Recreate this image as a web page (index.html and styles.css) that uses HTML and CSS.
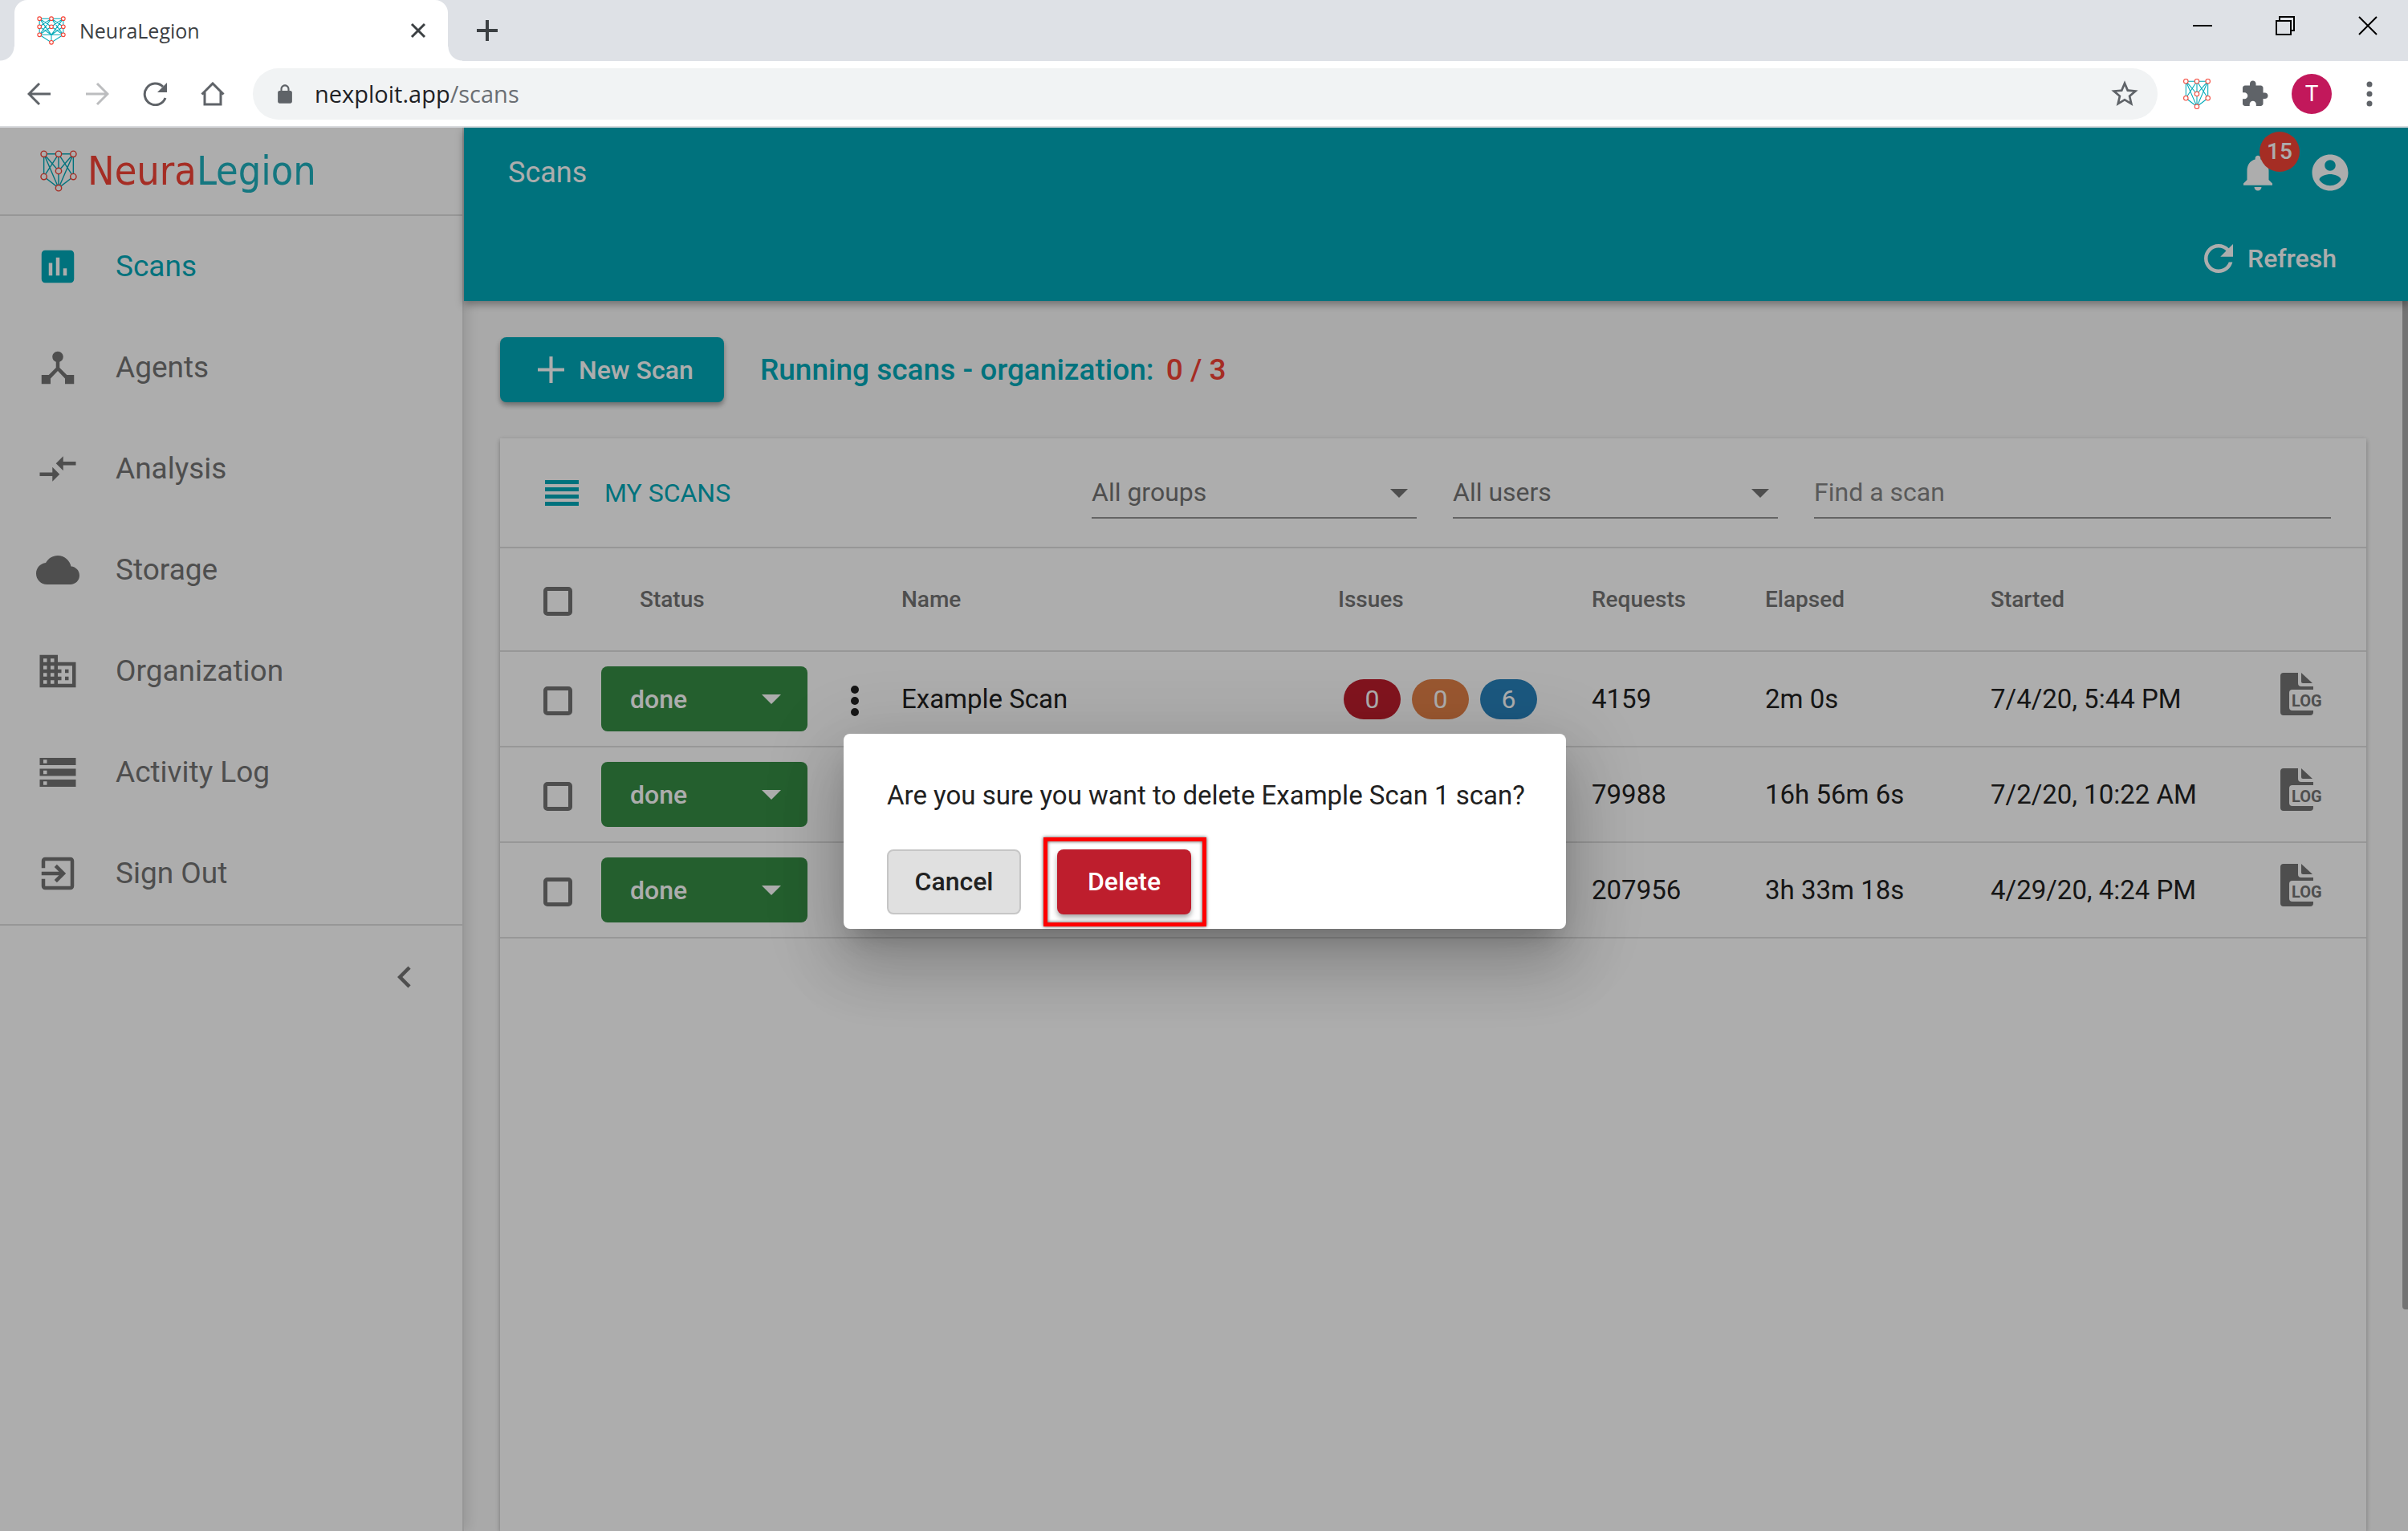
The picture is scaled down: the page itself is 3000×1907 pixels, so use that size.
FILE: index.html
```html
<!DOCTYPE html>
<html lang="en">
<head>
<meta charset="utf-8">
<title>NeuraLegion</title>
<link rel="stylesheet" href="styles.css">
</head>
<body>
<svg class="sprite" aria-hidden="true">
  <symbol id="mark" viewBox="0 0 34 38">
    <path class="mark-line" d="M4 4H30M4 4V24M30 4V24M4 4L17 19L30 4M4 4L17 34L30 4M17 4L4 24M17 4L30 24M17 4V34M4 24L17 34L30 24"/>
    <g class="mark-node"><circle cx="4" cy="4" r="2.6"/><circle cx="17" cy="4" r="2.6"/><circle cx="30" cy="4" r="2.6"/><circle cx="17" cy="19" r="2.6"/><circle cx="4" cy="24" r="2.6"/><circle cx="30" cy="24" r="2.6"/><circle cx="17" cy="34" r="2.6"/></g>
  </symbol>
  <symbol id="favicon" viewBox="0 0 34 34">
    <path class="mark-line" d="M3 3H31M3 3V22M31 3V22M3 22H31M3 3L17 12.500L31 3M3 12.500L17 3L31 12.500M3 12.500L17 22L31 12.500M3 3L17 22L31 3M3 22L17 3L31 22M3 22L17 12.500L31 22M3 22L17 31L31 22M17 22V31"/>
    <g class="mark-node"><circle cx="3" cy="3" r="2.200"/><circle cx="17" cy="3" r="2.200"/><circle cx="31" cy="3" r="2.200"/><circle cx="3" cy="12.500" r="2.200"/><circle cx="17" cy="12.500" r="2.200"/><circle cx="31" cy="12.500" r="2.200"/><circle cx="3" cy="22" r="2.200"/><circle cx="31" cy="22" r="2.200"/><circle cx="17" cy="31" r="2.200"/></g>
  </symbol>
  <symbol id="caret" viewBox="0 0 24 12"><path d="M0 0h24L12 12z"/></symbol>
  <symbol id="dots" viewBox="0 0 12 38"><circle cx="6" cy="5" r="5"/><circle cx="6" cy="19" r="5"/><circle cx="6" cy="33" r="5"/></symbol>
  <symbol id="log" viewBox="0 0 54 56">
    <path d="M5 1H23V14Q23 18 27 18H42V22H16Q12 22 12 26V44Q12 48 16 48H42V50Q42 54 38 54H5Q1 54 1 50V5Q1 1 5 1Z"/>
    <path d="M27 1L41 14H29Q27 14 27 12Z"/>
  </symbol>
</svg>

<header class="browser">
  <div class="tabstrip">
    <div class="tab">
      <svg class="favicon"><use href="#favicon"/></svg>
      <span class="tab-title">NeuraLegion</span>
      <button class="plain" aria-label="Close tab"><svg class="i20" viewBox="0 0 20 20"><path class="s3" d="M2 2L18 18M18 2L2 18"/></svg></button>
    </div>
    <button class="plain new-tab" aria-label="New tab"><svg class="i28" viewBox="0 0 28 28"><path class="s4" d="M14 1V27M1 14H27"/></svg></button>
    <div class="window-controls">
      <button class="plain" aria-label="Minimize"><svg class="i24" viewBox="0 0 24 24"><path class="s2" d="M0 12H24"/></svg></button>
      <button class="plain" aria-label="Restore"><svg class="i24" viewBox="0 0 24 24"><path class="s2" d="M1 6H19V23H1ZM5 6V1H23V18H19"/></svg></button>
      <button class="plain" aria-label="Close"><svg class="i24" viewBox="0 0 24 24"><path class="s2" d="M1 1L23 23M23 1L1 23"/></svg></button>
    </div>
  </div>
  <div class="toolbar">
    <nav class="history" aria-label="Browser">
      <button class="plain" aria-label="Back"><svg class="i30" viewBox="0 0 30 30"><path class="s3" d="M29 15H3M15 2L2 15L15 28"/></svg></button>
      <button class="plain faded" aria-label="Forward"><svg class="i30" viewBox="0 0 30 30"><path class="s3" d="M1 15H27M15 2L28 15L15 28"/></svg></button>
      <button class="plain" aria-label="Reload"><svg class="i30" viewBox="0 0 30 30"><path class="s3" d="M28 20A13.300 13.300 0 1 1 25 6"/><path class="fill" d="M30 1V13H18Z"/></svg></button>
      <button class="plain" aria-label="Home"><svg class="i30" viewBox="0 0 30 30"><path class="s3" d="M1.500 15.500L15 2L28.500 15.500M5 13V28H25V13"/></svg></button>
    </nav>
    <div class="omnibox">
      <svg class="lock" viewBox="3 0 18 23"><path d="M18 8h-1V6c0-2.760-2.240-5-5-5S7 3.240 7 6v2H6c-1.100 0-2 .9-2 2v10c0 1.100.9 2 2 2h12c1.100 0 2-.9 2-2V10c0-1.100-.9-2-2-2zm-2.900 0H8.900V6c0-1.710 1.390-3.100 3.100-3.100s3.100 1.390 3.100 3.100v2z"/></svg>
      <div class="url" role="textbox" aria-label="Address">nexploit.app<span class="url-path">/scans</span></div>
      <button class="plain" aria-label="Bookmark"><svg class="i40" viewBox="0 0 24 24"><path class="fill" d="M22 9.240l-7.190-.62L12 2 9.190 8.630 2 9.240l5.460 4.730L5.820 21 12 17.270 18.180 21l-1.630-7.030L22 9.240zM12 15.400l-3.760 2.270 1-4.280-3.320-2.880 4.380-.38L12 6.100l1.710 4.040 4.380.38-3.320 2.880 1 4.280L12 15.400z"/></svg></button>
    </div>
    <div class="extensions">
      <button class="plain" aria-label="NeuraLegion extension"><svg class="ext-mark"><use href="#mark"/></svg></button>
      <button class="plain" aria-label="Extensions"><svg class="i36" viewBox="0 0 24 24"><path class="fill" d="M20.500 11H19V7c0-1.100-.9-2-2-2h-4V3.500C13 2.120 11.880 1 10.500 1S8 2.120 8 3.500V5H4c-1.100 0-1.990.9-1.990 2v3.800H3.500c1.490 0 2.700 1.210 2.700 2.700s-1.210 2.700-2.700 2.700H2V20c0 1.100.9 2 2 2h3.800v-1.500c0-1.490 1.210-2.700 2.700-2.700 1.490 0 2.700 1.210 2.700 2.700V22H17c1.100 0 2-.9 2-2v-4h1.500c1.380 0 2.500-1.120 2.500-2.500S21.880 11 20.500 11z"/></svg></button>
      <button class="avatar" aria-label="Profile">T</button>
      <button class="plain more" aria-label="Menu"><svg viewBox="0 0 8 32"><circle class="fill" cx="4" cy="4" r="3.500"/><circle class="fill" cx="4" cy="16" r="3.500"/><circle class="fill" cx="4" cy="28" r="3.500"/></svg></button>
    </div>
  </div>
</header>

<div class="app">
  <aside class="sidebar">
    <a class="brand" href="#"><svg class="brand-mark"><use href="#mark"/></svg><span class="wordmark">Neura<span class="teal">Legion</span></span></a>
    <nav class="menu">
      <a class="item active" href="#"><svg class="icon" viewBox="0 0 24 24"><path d="M19 3H5c-1.100 0-2 .9-2 2v14c0 1.100.9 2 2 2h14c1.100 0 2-.9 2-2V5c0-1.100-.9-2-2-2zM9 17H7v-7h2v7zm4 0h-2V7h2v10zm4 0h-2v-4h2v4z"/></svg>Scans</a>
      <a class="item" href="#"><svg class="icon" viewBox="0 0 24 24"><path d="M17 16l-4-4V8.820C14.160 8.400 15 7.300 15 6c0-1.660-1.340-3-3-3S9 4.340 9 6c0 1.300.84 2.400 2 2.820V12l-4 4H3v5h5v-3.050l4-4.200 4 4.200V21h5v-5h-4z"/></svg>Agents</a>
      <a class="item" href="#"><svg class="icon" viewBox="0 0 24 24"><path d="M9.010 14H2v2h7.010v3L13 15l-3.990-4v3zm5.980-1v-3H22V8h-7.010V5L11 9l3.990 4z"/></svg>Analysis</a>
      <a class="item" href="#"><svg class="icon" viewBox="0 0 24 24"><path d="M19.350 10.040C18.670 6.590 15.640 4 12 4 9.110 4 6.600 5.640 5.350 8.040 2.340 8.360 0 10.910 0 14c0 3.310 2.690 6 6 6h13c2.760 0 5-2.240 5-5 0-2.640-2.050-4.780-4.650-4.960z"/></svg>Storage</a>
      <a class="item" href="#"><svg class="icon" viewBox="0 0 24 24"><path d="M12 7V3H2v18h20V7H12zM6 19H4v-2h2v2zm0-4H4v-2h2v2zm0-4H4V9h2v2zm0-4H4V5h2v2zm4 12H8v-2h2v2zm0-4H8v-2h2v2zm0-4H8V9h2v2zm0-4H8V5h2v2zm10 12h-8v-2h2v-2h-2v-2h2v-2h-2V9h8v10zm-2-8h-2v2h2v-2zm0 4h-2v2h2v-2z"/></svg>Organization</a>
      <a class="item" href="#"><svg class="icon" viewBox="0 0 24 24"><path d="M2 20h20v-4H2v4zm2-3h2v2H4v-2zM2 4v4h20V4H2zm4 3H4V5h2v2zm-4 7h20v-4H2v4zm2-3h2v2H4v-2z"/></svg>Activity Log</a>
      <a class="item" href="#"><svg class="icon" viewBox="0 0 24 24"><path d="M10.090 15.590L11.500 17l5-5-5-5-1.410 1.410L12.670 11H3v2h9.670l-2.580 2.590zM19 3H5c-1.110 0-2 .9-2 2v4h2V5h14v14H5v-4H3v4c0 1.100.89 2 2 2h14c1.100 0 2-.9 2-2V5c0-1.100-.9-2-2-2z"/></svg>Sign Out</a>
    </nav>
    <button class="plain collapse" aria-label="Collapse menu"><svg class="icon" viewBox="0 0 24 24"><path d="M15.410 7.410L14 6l-6 6 6 6 1.410-1.410L10.830 12z"/></svg></button>
  </aside>

  <main class="main">
    <header class="page-head">
      <div class="head-row">
        <h1>Scans</h1>
        <button class="plain bell" aria-label="Notifications"><svg class="icon" viewBox="0 0 24 24"><path d="M12 22c1.100 0 2-.9 2-2h-4c0 1.100.89 2 2 2zm6-6v-5c0-3.070-1.640-5.640-4.500-6.320V4c0-.83-.67-1.500-1.500-1.500s-1.500.67-1.500 1.500v.68C7.630 5.360 6 7.920 6 11v5l-2 2v1h16v-1l-2-2z"/></svg><span class="count">15</span></button>
        <button class="plain" aria-label="Account"><svg class="icon" viewBox="0 0 24 24"><path d="M12 2C6.480 2 2 6.480 2 12s4.480 10 10 10 10-4.480 10-10S17.520 2 12 2zm0 3c1.660 0 3 1.340 3 3s-1.340 3-3 3-3-1.340-3-3 1.340-3 3-3zm0 14.200c-2.500 0-4.710-1.280-6-3.220.03-1.990 4-3.080 6-3.080 1.990 0 5.970 1.090 6 3.080-1.290 1.940-3.500 3.220-6 3.220z"/></svg></button>
      </div>
      <div class="head-row actions">
        <button class="plain refresh"><svg class="icon" viewBox="0 0 24 24"><path d="M17.650 6.350C16.200 4.900 14.210 4 12 4c-4.420 0-7.990 3.580-7.990 8s3.570 8 7.990 8c3.730 0 6.840-2.550 7.730-6h-2.080c-.82 2.330-3.040 4-5.650 4-3.310 0-6-2.690-6-6s2.690-6 6-6c1.660 0 3.140.69 4.220 1.780L13 11h7V4l-2.350 2.350z"/></svg>Refresh</button>
      </div>
    </header>

    <div class="content">
      <div class="intro">
        <button class="btn primary"><svg class="plus" viewBox="0 0 32 32"><path d="M16 0V32M0 16H32"/></svg>New Scan</button>
        <p class="running">Running scans - organization: <span class="red">0 / 3</span></p>
      </div>
      <section class="card">
        <div class="filters">
          <h2><svg class="list-icon" viewBox="0 0 42 32"><path d="M0 0h42v5H0zM0 9h42v5H0zM0 18h42v5H0zM0 27h42v5H0z"/></svg>MY SCANS</h2>
          <div class="select"><select aria-label="Group"><option>All groups</option></select><svg><use href="#caret"/></svg></div>
          <div class="select"><select aria-label="User"><option>All users</option></select><svg><use href="#caret"/></svg></div>
          <input class="find" type="text" placeholder="Find a scan" aria-label="Find a scan">
        </div>
        <table>
          <colgroup><col class="c-check"><col class="c-status"><col class="c-menu"><col><col class="c-issues"><col class="c-requests"><col class="c-elapsed"><col class="c-started"><col class="c-log"></colgroup>
          <thead>
            <tr><th class="check"><input type="checkbox" aria-label="Select all scans"></th><th class="th-status">Status</th><th></th><th>Name</th><th>Issues</th><th>Requests</th><th>Elapsed</th><th>Started</th><th></th></tr>
          </thead>
          <tbody>
            <tr><td class="check"><input type="checkbox" aria-label="Select scan"></td><td><button class="btn done">done<svg><use href="#caret"/></svg></button></td><td><button class="plain kebab" aria-label="Scan actions"><svg><use href="#dots"/></svg></button></td><td>Example Scan</td><td><div class="issues"><span class="pill high">0</span><span class="pill medium">0</span><span class="pill low">6</span></div></td><td>4159</td><td>2m 0s</td><td>7/4/20, 5:44 PM</td><td><button class="plain log" aria-label="Scan log"><svg><use href="#log"/><text class="log-text" x="15" y="43">LOG</text></svg></button></td></tr>
            <tr><td class="check"><input type="checkbox" aria-label="Select scan"></td><td><button class="btn done">done<svg><use href="#caret"/></svg></button></td><td></td><td></td><td></td><td>79988</td><td>16h 56m 6s</td><td>7/2/20, 10:22 AM</td><td><button class="plain log" aria-label="Scan log"><svg><use href="#log"/><text class="log-text" x="15" y="43">LOG</text></svg></button></td></tr>
            <tr><td class="check"><input type="checkbox" aria-label="Select scan"></td><td><button class="btn done">done<svg><use href="#caret"/></svg></button></td><td></td><td></td><td></td><td>207956</td><td>3h 33m 18s</td><td>4/29/20, 4:24 PM</td><td><button class="plain log" aria-label="Scan log"><svg><use href="#log"/><text class="log-text" x="15" y="43">LOG</text></svg></button></td></tr>
          </tbody>
        </table>
      </section>
      <div class="scroll-thumb"></div>
    </div>
  </main>

  <div class="backdrop">
    <div class="dialog" role="dialog" aria-modal="true" aria-labelledby="question">
      <p id="question">Are you sure you want to delete Example Scan 1 scan?</p>
      <div class="dialog-actions">
        <button class="btn cancel">Cancel</button>
        <div class="marked"><button class="btn delete">Delete</button></div>
      </div>
    </div>
  </div>
</div>
</body>
</html>
```

FILE: styles.css
```css
:root {
  --teal: #00a9b8;
  --red: #f44336;
  --crimson: #be1e2d;
  --grey: #747474;
  --line: #dfdfdf;
}

* { box-sizing: border-box; }

body {
  margin: 0;
  min-height: 100vh;
  display: flex;
  flex-direction: column;
  font: 32px/40px Roboto, sans-serif;
  color: #212121;
  background: #fff;
}

button, input, select { font: inherit; color: inherit; }
a { color: inherit; text-decoration: none; }
h1, h2, p { margin: 0; font-weight: 400; }
svg { display: block; fill: currentColor; flex: none; }
button { cursor: pointer; }

.sprite { position: absolute; width: 0; height: 0; }
.plain { display: flex; align-items: center; padding: 0; border: 0; background: none; }
.icon { width: 54px; height: 54px; }
.mark-line { fill: none; stroke: var(--teal); stroke-width: 1; }
.mark-node { fill: #fff; stroke: var(--red); stroke-width: 1; }

/* Browser window */
.browser { border-bottom: 2px solid #d9dbde; font-family: "Open Sans", sans-serif; color: #5f6368; }
.tabstrip { display: flex; height: 76px; padding-left: 18px; background: #dee1e6; color: #3c4043; }
.tab { position: relative; display: flex; align-items: center; width: 540px; padding: 0 27px 0 28px; border-radius: 16px 16px 0 0; background: #fff; }
.tab::before, .tab::after { content: ""; position: absolute; bottom: 0; width: 18px; height: 18px; }
.tab::before { right: 100%; background: radial-gradient(circle at 0 0, transparent 17px, #fff 18px); }
.tab::after { left: 100%; background: radial-gradient(circle at 100% 0, transparent 17px, #fff 18px); }
.favicon { width: 36px; height: 36px; }
.tab-title { flex: 1; padding-left: 17px; font-size: 25px; }
.new-tab { padding-left: 35px; }
.window-controls { display: flex; gap: 79px; margin-left: auto; padding: 0 38px 12px 0; color: #000; }
.toolbar { display: flex; align-items: center; height: 81px; padding: 0 44px 0 34px; }
.history { display: flex; gap: 42px; margin-right: 35px; }
.faded { color: #bcbdbf; }
.omnibox { display: flex; align-items: center; flex: 1; height: 64px; padding: 0 21px 0 30px; border-radius: 32px; background: #f1f3f4; }
.lock { width: 20px; height: 26px; }
.url { flex: 1; padding-left: 27px; font-size: 29px; color: #202124; }
.url-path { color: #6a6e73; }
.extensions { display: flex; align-items: center; margin-left: 31px; }
.ext-mark { width: 36px; height: 40px; margin-right: 36px; }
.avatar { width: 50px; height: 50px; margin: 0 43px 0 28px; padding: 0; border: 0; border-radius: 50%; background: #c2185b; color: #fff; font: 28px/50px Roboto, sans-serif; }
.more svg { width: 8px; height: 32px; }
.s2, .s3, .s4 { fill: none; stroke: currentColor; }
.s2 { stroke-width: 2; }
.s3 { stroke-width: 3; }
.s4 { stroke-width: 4; }
.i20 { width: 20px; height: 20px; }
.i24 { width: 24px; height: 24px; }
.i28 { width: 28px; height: 28px; }
.i30 { width: 30px; height: 30px; }
.i36 { width: 36px; height: 36px; }
.i40 { width: 40px; height: 40px; }

/* Application frame */
.app { position: relative; flex: 1; display: grid; grid-template-columns: 578px minmax(0, 1fr); overflow: hidden; }
.sidebar { position: relative; z-index: 1; border-right: 2px solid var(--line); background: #fff; box-shadow: 4px 0 16px rgba(0, 0, 0, .12); color: var(--grey); }
.brand { display: flex; align-items: center; height: 110px; padding-left: 49px; border-bottom: 2px solid var(--line); }
.brand-mark { width: 48px; height: 54px; }
.wordmark { padding-left: 12px; font: 50px/64px "DejaVu Sans Condensed", sans-serif; color: var(--red); }
.teal { color: #1fb0bd; }
.menu { border-bottom: 2px solid var(--line); }
.item { display: flex; align-items: center; gap: 45px; height: 126px; padding-left: 45px; font-size: 37px; line-height: 44px; }
.active { color: var(--teal); }
.collapse { margin: 37px 45px 0 auto; }

.main { display: flex; flex-direction: column; background: #fafafa; }
.page-head { position: relative; z-index: 2; background: var(--teal); color: #fff; box-shadow: 0 4px 10px rgba(0, 0, 0, .35); }
.head-row { display: flex; align-items: center; height: 112px; padding: 0 70px 0 55px; }
.head-row h1 { flex: 1; font-size: 36px; }
.bell { position: relative; margin-right: 36px; }
.count { position: absolute; left: 29px; top: -24px; width: 50px; height: 50px; border-radius: 50%; background: var(--red); font-size: 28px; line-height: 50px; font-weight: 500; }
.actions { height: 104px; justify-content: flex-end; padding: 0 89px 2px 0; }
.refresh { gap: 9px; font-weight: 500; }

.content { position: relative; flex: 1; display: flex; flex-direction: column; padding: 45px 52px 0 45px; }
.intro { display: flex; align-items: center; gap: 45px; margin-bottom: 45px; }
.btn { height: 81px; padding: 0 36px; border: 0; border-radius: 8px; font-weight: 500; color: #fff; }
.primary { display: flex; align-items: center; gap: 18px; width: 279px; padding-left: 47px; background: var(--teal); box-shadow: 0 4px 6px rgba(0, 0, 0, .35); }
.plus { width: 33px; height: 33px; stroke: currentColor; stroke-width: 4; }
.running { font-size: 37px; font-weight: 500; color: var(--teal); }
.red { margin-left: 6px; color: var(--red); }

.card { flex: 1; background: #fff; box-shadow: 0 2px 6px rgba(0, 0, 0, .3); }
.filters { display: flex; align-items: center; gap: 45px; height: 137px; padding: 0 44px 0 56px; border-bottom: 2px solid var(--line); }
.filters h2 { flex: 1; display: flex; align-items: center; gap: 32px; font-size: 32px; color: var(--teal); }
.list-icon { width: 42px; height: 32px; }
.select { position: relative; width: 405px; color: var(--grey); }
.select select, .find { display: block; width: 100%; height: 64px; padding: 0; border: 0; border-bottom: 2px solid #949494; border-radius: 0; background: none; appearance: none; outline: 0; }
.select svg { position: absolute; right: 11px; top: 27px; width: 22px; height: 11px; }
.filters .find { width: 644px; }
.find::placeholder { color: #858585; opacity: 1; }

table { width: 100%; table-layout: fixed; border-collapse: collapse; font-size: 33px; }
.c-check { width: 126px; }
.c-status { width: 286px; }
.c-menu { width: 88px; }
.c-issues { width: 316px; }
.c-requests { width: 216px; }
.c-elapsed { width: 281px; }
.c-started { width: 360px; }
.c-log { width: 108px; }
th, td { padding: 0; border-bottom: 2px solid var(--line); text-align: left; }
th { height: 128px; font-size: 28px; font-weight: 500; color: var(--grey); }
td { height: 119px; }
.th-status { padding-left: 48px; }
.check { padding: 4px 0 0 54px; }
.check input { display: block; appearance: none; width: 36px; height: 36px; margin: 0; border: 5px solid var(--grey); border-radius: 5px; }
.done { display: flex; align-items: center; justify-content: space-between; width: 257px; padding-right: 33px; background: #368d44; font-size: 32px; }
.done svg { width: 24px; height: 12px; }
.kebab { margin: 4px 0 0 24px; }
.kebab svg { width: 12px; height: 38px; }
.issues { display: flex; gap: 14px; padding-left: 7px; }
.pill { width: 71px; height: 50px; border-radius: 25px; font-size: 32px; line-height: 50px; text-align: center; color: #fff; }
.high { background: var(--crimson); }
.medium { background: #e28048; }
.low { background: #2982bc; }
.log { margin-bottom: 12px; color: var(--grey); }
.log svg { width: 54px; height: 56px; }
.log-text { font: 700 20px Roboto, sans-serif; }
.scroll-thumb { position: absolute; top: 0; right: 0; width: 7px; height: 82%; border-radius: 0 0 0 4px; background: #aaa; }

/* Confirmation dialog */
.backdrop { position: absolute; inset: 0; z-index: 5; display: grid; place-items: center; padding: 4px 0 0 2px; background: rgba(0, 0, 0, .32); }
.dialog { width: 900px; max-width: 100%; padding: 57px 50px 18px 54px; border-radius: 8px; background: #fff; box-shadow: 0 22px 30px -14px rgba(0, 0, 0, .2), 0 48px 76px 6px rgba(0, 0, 0, .14), 0 18px 92px 16px rgba(0, 0, 0, .12); }
.dialog p { font-size: 33px; white-space: nowrap; }
.dialog-actions { display: flex; gap: 45px; margin-top: 47px; }
.dialog-actions .btn { width: 167px; }
.cancel { border: 2px solid #c6c6c6; padding: 0; background: #e0e0e0; color: #212121; }
.delete { padding: 0; background: var(--crimson); box-shadow: 0 4px 6px rgba(0, 0, 0, .35); }
.marked { position: relative; }
.marked::after { content: ""; position: absolute; inset: -15px -19px -15px -17px; border: 5px solid #f00; box-shadow: 0 0 4px rgba(0, 0, 0, .7), inset 0 0 4px rgba(0, 0, 0, .7); pointer-events: none; }
```
